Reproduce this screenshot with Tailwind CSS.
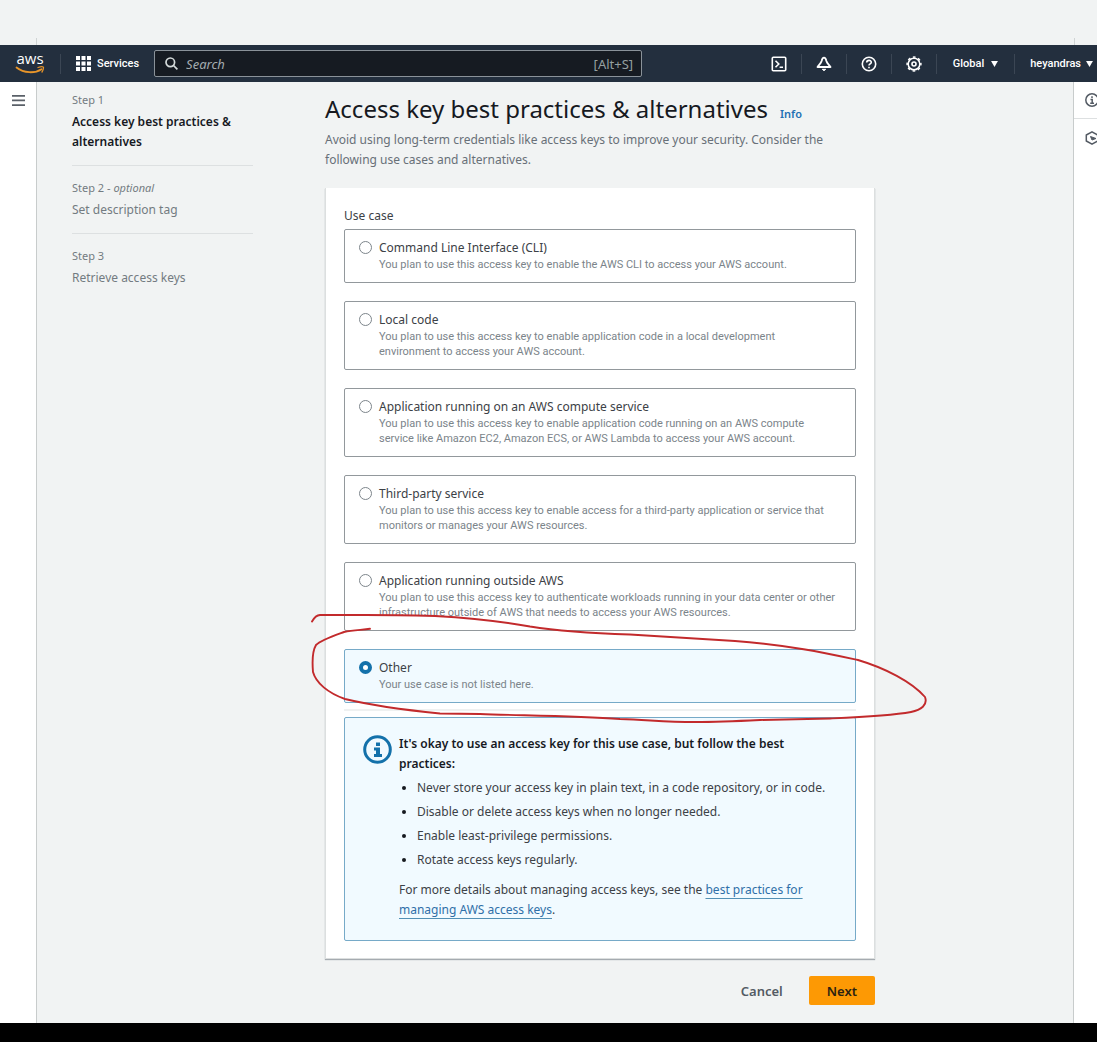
<!DOCTYPE html>
<html lang="en">
<head>
<meta charset="utf-8">
<meta name="viewport" content="width=device-width, initial-scale=1">
<title>Create access key</title>
<script src="https://cdn.jsdelivr.net/npm/@tailwindcss/browser@4"></script>
</head>
<body class="flex min-h-screen flex-col overflow-x-hidden bg-[#f1f3f3] font-['Noto_Sans',sans-serif] text-xs leading-5 text-[#3c4146]">

<!-- Strip above the navigation bar -->
<div class="flex h-[45px] items-end justify-between pr-[22px] pl-9">
  <span class="h-[7px] w-px bg-[#d0d4d4]"></span>
  <span class="h-[7px] w-px bg-[#d0d4d4]"></span>
</div>

<header class="flex h-[37px] items-center bg-[#232f3e] font-['Roboto',sans-serif] text-[11px] font-medium text-white">
  <a href="#" aria-label="AWS home" class="flex w-[60px] justify-center">
    <svg class="h-8 w-[30px]" viewBox="0 -4 30 32">
      <text x="15" y="12" text-anchor="middle" font-family="Open Sans, sans-serif" font-size="15" font-weight="500" fill="#fff">aws</text>
      <path d="M1.500 15.500C9 21.500 20 21.500 26.500 17.200" fill="none" stroke="#e8952a" stroke-width="1.800" stroke-linecap="round"/>
      <path d="M23 15.500C26 14.500 28.700 14.300 28.500 15.700C28.300 17.500 27.800 19 27 20" fill="none" stroke="#e8952a" stroke-width="1.300" stroke-linecap="round"/>
    </svg>
  </a>
  <span class="h-5 w-px bg-[#3b4654]"></span>
  <button type="button" class="flex items-center gap-1.5 px-[15px]">
    <svg class="size-[15px]" viewBox="0 0 15 15" fill="#fff"><path d="M0 0h4v4H0zM5.500 0h4v4h-4zM11 0h4v4h-4zM0 5.500h4v4H0zM5.500 5.500h4v4h-4zM11 5.500h4v4h-4zM0 11h4v4H0zM5.500 11h4v4h-4zM11 11h4v4h-4z"/></svg>
    <span>Services</span>
  </button>
  <label class="flex h-[27px] min-w-0 max-w-[488px] flex-1 items-center rounded-xs border border-[#8a9299] bg-[#161b22] px-2">
    <svg class="mx-0.5 size-[13px] shrink-0" viewBox="0 0 13 13" fill="none" stroke="#d5dbdb" stroke-width="1.700"><circle cx="5.300" cy="5.300" r="4.300"/><path d="M8.500 8.500L12.400 12.400"/></svg>
    <input type="search" aria-label="Search" placeholder="Search" class="ml-1.5 min-w-0 flex-1 bg-transparent font-['Noto_Sans',sans-serif] text-[13px] font-normal italic outline-none placeholder:text-[#a3acb0]">
    <span class="font-['Noto_Sans',sans-serif] text-[13px] font-normal text-[#95a0a0]">[Alt+S]</span>
  </label>
  <nav class="ml-auto flex h-5 shrink-0 items-center">
    <button type="button" aria-label="CloudShell" class="flex h-5 w-[45px] items-center justify-center border-r border-[#3b4654]">
      <svg class="size-4" viewBox="0 0 16 16" fill="none" stroke="#fff" stroke-width="1.600"><rect x="1.300" y="1.300" width="13.400" height="13.400" rx="1"/><path d="M4.500 4.700L7.800 8L4.500 11.300M8.600 11.200H12"/></svg>
    </button>
    <button type="button" aria-label="Notifications" class="flex h-5 w-[45px] items-center justify-center border-r border-[#3b4654]">
      <svg class="size-4" viewBox="0 0 16 16" fill="none" stroke="#fff" stroke-width="1.800" stroke-linejoin="round"><path d="M8 1.700C6.400 1.700 6 3.200 5.600 5C5 7.300 3 8.800 1.500 11H14.500C13 8.800 11 7.300 10.400 5C10 3.200 9.600 1.700 8 1.700Z"/><path d="M6.300 13.300H9.700L8 14.700Z" fill="#fff" stroke-width="1"/></svg>
    </button>
    <button type="button" aria-label="Help" class="flex h-5 w-[45px] items-center justify-center border-r border-[#3b4654]">
      <svg class="size-4" viewBox="0 0 16 16" fill="none" stroke="#fff" stroke-width="1.600"><circle cx="8" cy="8" r="6.700"/><path d="M5.700 6.600C5.700 3.700 10.300 3.700 10.300 6.300C10.300 8 8 7.900 8 9.600M8 10.700V12.300"/></svg>
    </button>
    <button type="button" aria-label="Settings" class="flex h-5 w-[45px] items-center justify-center border-r border-[#3b4654]">
      <svg class="size-4" viewBox="0 0 16 16" fill="none" stroke="#fff"><circle cx="8" cy="8" r="5.800" stroke-width="1.500"/><circle cx="8" cy="8" r="6.900" stroke-width="1.500" stroke-dasharray="2.710 2.710" stroke-dashoffset="1.355"/><circle cx="8" cy="8" r="2" stroke-width="1.600"/></svg>
    </button>
    <button type="button" class="flex h-5 items-center gap-[7px] border-r border-[#3b4654] px-4">Global <svg class="h-1.5 w-[7px]" viewBox="0 0 8 7" fill="#fff"><path d="M0 0H8L4 7Z"/></svg></button>
    <button type="button" class="flex h-5 items-center gap-[5px] pr-1 pl-[15px]">heyandras <svg class="h-1.5 w-[7px]" viewBox="0 0 8 7" fill="#fff"><path d="M0 0H8L4 7Z"/></svg></button>
  </nav>
</header>

<div class="flex flex-1">
  <aside class="w-[37px] shrink-0 border-r border-[#c8cccc] bg-white pt-[13px] pl-3">
    <button type="button" aria-label="Open navigation" class="block">
      <svg class="h-[11px] w-[13px]" viewBox="0 0 13 11" fill="#5a6068"><path d="M0 0h13v1.700H0zM0 4.600h13v1.700H0zM0 9.200h13v1.700H0z"/></svg>
    </button>
  </aside>

  <div class="flex min-w-0 flex-1 gap-[72px] px-[35px] pt-2">
    <ol class="w-[181px] shrink-0 divide-y divide-[#dde0e1] text-[#737b81]">
      <li class="pb-[13px]">
        <div class="text-[11px]">Step 1</div>
        <div class="pt-0.5 font-semibold text-[#16191f]">Access key best practices &amp; alternatives</div>
      </li>
      <li class="pt-3 pb-[13px]">
        <div class="text-[11px]">Step 2 - <i>optional</i></div>
        <div class="pt-0.5">Set description tag</div>
      </li>
      <li class="pt-3">
        <div class="text-[11px]">Step 3</div>
        <div class="pt-0.5">Retrieve access keys</div>
      </li>
    </ol>

    <main class="max-w-[550px] min-w-0 flex-1">
      <h1 class="flex items-baseline gap-3 pt-px text-2xl leading-9 whitespace-nowrap text-[#16191f]">Access key best practices &amp; alternatives <a href="#" class="text-[11px] leading-4 font-semibold text-[#2470b3]">Info</a></h1>
      <p class="mt-[3px] text-[#687078]">Avoid using long-term credentials like access keys to improve your security. Consider the<br>following use cases and alternatives.</p>

      <form class="relative mt-[18px] border-x border-b border-[#dcdfdf] bg-white px-[18px] pt-[18px] pb-[17px] shadow-[0_1px_1px_#a5abb0]">
        <fieldset>
          <legend class="mb-[3px]">Use case</legend>
          <div class="flex flex-col gap-[18px]">
            <label class="flex gap-[7px] rounded-xs border border-[#92989c] px-[14px] pt-2 pb-[10px]">
              <input type="radio" name="use" class="mt-[3px] size-[13px] shrink-0 appearance-none rounded-full border border-[#7d858b] checked:border-4 checked:border-[#1471aa] checked:bg-white">
              <span><span class="block leading-[19px]">Command Line Interface (CLI)</span><span class="block font-['Roboto',sans-serif] text-[11px] leading-[15px] text-[#7b848a]">You plan to use this access key to enable the AWS CLI to access your AWS account.</span></span>
            </label>
            <label class="flex gap-[7px] rounded-xs border border-[#92989c] px-[14px] pt-2 pb-[10px]">
              <input type="radio" name="use" class="mt-[3px] size-[13px] shrink-0 appearance-none rounded-full border border-[#7d858b] checked:border-4 checked:border-[#1471aa] checked:bg-white">
              <span><span class="block leading-[19px]">Local code</span><span class="block font-['Roboto',sans-serif] text-[11px] leading-[15px] text-[#7b848a]">You plan to use this access key to enable application code in a local development<br>environment to access your AWS account.</span></span>
            </label>
            <label class="flex gap-[7px] rounded-xs border border-[#92989c] px-[14px] pt-2 pb-[10px]">
              <input type="radio" name="use" class="mt-[3px] size-[13px] shrink-0 appearance-none rounded-full border border-[#7d858b] checked:border-4 checked:border-[#1471aa] checked:bg-white">
              <span><span class="block leading-[19px]">Application running on an AWS compute service</span><span class="block font-['Roboto',sans-serif] text-[11px] leading-[15px] text-[#7b848a]">You plan to use this access key to enable application code running on an AWS compute<br>service like Amazon EC2, Amazon ECS, or AWS Lambda to access your AWS account.</span></span>
            </label>
            <label class="flex gap-[7px] rounded-xs border border-[#92989c] px-[14px] pt-2 pb-[10px]">
              <input type="radio" name="use" class="mt-[3px] size-[13px] shrink-0 appearance-none rounded-full border border-[#7d858b] checked:border-4 checked:border-[#1471aa] checked:bg-white">
              <span><span class="block leading-[19px]">Third-party service</span><span class="block font-['Roboto',sans-serif] text-[11px] leading-[15px] text-[#7b848a]">You plan to use this access key to enable access for a third-party application or service that<br>monitors or manages your AWS resources.</span></span>
            </label>
            <label class="flex gap-[7px] rounded-xs border border-[#92989c] px-[14px] pt-2 pb-[10px]">
              <input type="radio" name="use" class="mt-[3px] size-[13px] shrink-0 appearance-none rounded-full border border-[#7d858b] checked:border-4 checked:border-[#1471aa] checked:bg-white">
              <span><span class="block leading-[19px]">Application running outside AWS</span><span class="block font-['Roboto',sans-serif] text-[11px] leading-[15px] text-[#7b848a]">You plan to use this access key to authenticate workloads running in your data center or other<br>infrastructure outside of AWS that needs to access your AWS resources.</span></span>
            </label>
            <label class="flex gap-[7px] rounded-xs border border-[#76aac8] bg-[#f1faff] px-[14px] pt-2 pb-[10px]">
              <input type="radio" name="use" checked class="mt-[3px] size-[13px] shrink-0 appearance-none rounded-full border border-[#7d858b] checked:border-4 checked:border-[#1471aa] checked:bg-white">
              <span><span class="block leading-[19px]">Other</span><span class="block font-['Roboto',sans-serif] text-[11px] leading-[15px] text-[#7b848a]">Your use case is not listed here.</span></span>
            </label>
          </div>
        </fieldset>

        <hr class="my-1.5 border-t-2 border-[#eff1f1]">

        <section class="flex gap-[7px] rounded-xs border border-[#76aac8] bg-[#f1faff] px-[18px] pt-4 pb-5">
          <svg class="mt-px size-[29px] shrink-0" viewBox="0 0 29 29"><circle cx="14.500" cy="14.500" r="12.800" fill="none" stroke="#1471aa" stroke-width="3"/><path d="M13 7.500h4v3.500h-4zM11 12.500h6v6.500h2v3h-8v-3h2v-3.500h-2z" fill="#1471aa"/></svg>
          <div>
            <h2 class="font-semibold text-[#16191f]">It's okay to use an access key for this use case, but follow the best<br>practices:</h2>
            <ul class="mt-1 flex list-disc flex-col gap-1 pl-[18px] marker:text-[#16191f]">
              <li>Never store your access key in plain text, in a code repository, or in code.</li>
              <li>Disable or delete access keys when no longer needed.</li>
              <li>Enable least-privilege permissions.</li>
              <li>Rotate access keys regularly.</li>
            </ul>
            <p class="mt-[10px]">For more details about managing access keys, see the <a href="#" class="text-[#2f6fa8] underline decoration-[#5290b5] underline-offset-4">best practices for<br>managing AWS access keys</a>.</p>
          </div>
        </section>

        <!-- Hand-drawn ring around the "Other" option -->
        <svg class="pointer-events-none absolute top-[422px] -left-5 h-[120px] w-[630px]" viewBox="306 610 630 120" fill="none" stroke="#c22a2c" stroke-width="1.900" stroke-linecap="round" stroke-linejoin="round">
          <path d="M312 621.500C314 618 316 615.200 320 615L365 615C395 615 415 615.500 435 616C470 618 500 621 530 626.500C565 632 600 633.500 630 634.500L735 641C790 645 830 654 858 660C885 668 912 682 925 697C928 705 921 710 911 712C890 716 865 717 830 718.500L760 720C730 721.500 715 722 695 722C665 722 650 720 620 719C575 716 520 715.500 480 714L440 713.500C405 710 370 705 345 699C328 693 316 683 313 672C312 660 313 650 316 645C321 640 333 636 344 632C353 630 362 630 370 628.800"/>
        </svg>
      </form>

      <div class="flex items-center justify-end gap-[26px] pt-[17px] pb-[18px] text-[13px] font-semibold">
        <button type="button" class="text-[#545b64]">Cancel</button>
        <button type="button" class="h-[29px] rounded-xs bg-[#fd9904] px-[18px] text-[#2b2212]">Next</button>
      </div>
    </main>
  </div>

  <aside class="w-6 shrink-0 overflow-hidden border-l border-[#c8cccc] bg-white">
    <button type="button" aria-label="Info panel" class="block h-[37px] w-full border-b border-[#dde0e1] pl-[11px]">
      <svg class="size-[14px] max-w-none" viewBox="0 0 14 14" fill="none" stroke="#545b64" stroke-width="1.500"><circle cx="7" cy="7" r="6.200"/><path d="M7 3.200V5M5.500 6.500H7.200V10M5.200 10.200H9"/></svg>
    </button>
    <button type="button" aria-label="Tutorials" class="block h-[37px] w-full pl-[11px]">
      <svg class="size-[14px] max-w-none" viewBox="0 0 14 14" fill="none" stroke="#545b64" stroke-width="1.500" stroke-linejoin="round"><path d="M12.600 9.500V10L7 13.200L1.300 10V4L7 .8L12.600 4V5.500"/><path d="M5.500 5.500L11 7.500L7 9Z" fill="#545b64" stroke-width="1"/></svg>
    </button>
  </aside>
</div>

<footer class="h-[19px] bg-black"></footer>
</body>
</html>
